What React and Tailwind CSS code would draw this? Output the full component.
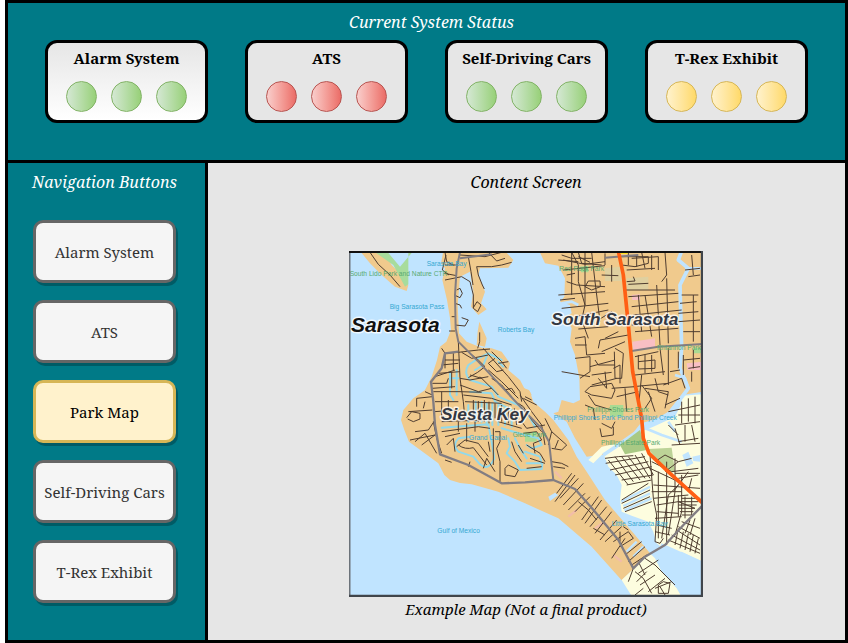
const statuses = [
  { name: 'Alarm System', tone: 'green', card: 'bg-linear-to-b from-[#e6e6e6] to-white' },
  { name: 'ATS', tone: 'red', card: 'bg-[#e6e6e6]' },
  { name: 'Self-Driving Cars', tone: 'green', card: 'bg-[#e6e6e6]' },
  { name: 'T-Rex Exhibit', tone: 'yellow', card: 'bg-[#e6e6e6]' },
];

const tones = {
  green: 'border-[#82b366] from-[#d5e8d4] to-[#97d077]',
  red: 'border-[#b85450] from-[#f8cecc] to-[#ea6b66]',
  yellow: 'border-[#d6b656] from-[#fff2cc] to-[#ffd966]',
};

const pages = ['Alarm System', 'ATS', 'Park Map', 'Self-Driving Cars', 'T-Rex Exhibit'];

function StatusCard({ name, tone, card }) {
  return (
    <section className={`flex h-[83px] w-[163px] flex-col items-center justify-between rounded-xl border-3 border-black pt-[3px] pb-2 ${card}`}>
      <h2 className="text-[15px] leading-6 font-bold whitespace-nowrap">{name}</h2>
      <div className="flex gap-3.5">
        {[0, 1, 2].map((i) => (
          <span key={i} className={`size-[31px] rounded-full border bg-linear-to-r ${tones[tone]}`} />
        ))}
      </div>
    </section>
  );
}

const streets = [
  // Lido and the northern tip of the key
  'M75 22L100 58L135 90L165 125M345 30L420 35L470 22M395 65H440L470 60L500 52M395 65L400 90L412 120L418 132M300 60H335M298 85L335 92M300 105L350 95L375 110L385 150V190L398 200L408 180L396 170L385 188M335 135L345 130L352 145L345 158L332 152M330 175L345 180L350 190M330 215H320M330 240L360 243L370 225L350 218M330 258H312M404 262V290L398 310M370 35L378 80L384 120M300 22L305 50L325 60M430 22L455 48L480 40M303 30L292 75L312 90',
  // Siesta Key, northern half
  'M290 310L300 325L340 322M340 322L400 315L435 312M350 322L380 340L430 330M300 345H345M290 360L340 355M270 395L330 375M262 415H305L310 400M262 430L330 425M320 380V430M340 290L345 400L355 470L360 525M345 400L375 405L430 395M345 420L400 440L440 430M440 320L470 350L485 370M450 340L430 355L455 380L475 375M415 310L445 345L490 395L525 440L530 470M400 345L420 365L398 382L370 398M440 400L470 420L500 455M355 450L440 460L500 480M360 470L470 475M240 440L262 450M215 485V460L262 455M190 500L262 495M185 518L200 500L225 505V522L205 530L188 522M270 470H340M268 500L340 495M240 470L235 490M290 440V520M310 465V500M385 465V525M400 468V530M418 465V530M432 470V535M450 475V520M470 480V530M490 485V535M508 490L515 540M525 450L560 500L590 540L600 600',
  'M375 325L400 345M430 375L470 410L520 460M460 355L490 350M405 395L460 450M535 460L575 480M540 455L560 465M480 435L500 430L510 445M520 475L535 485L560 525L590 560M600 520L620 560L665 600L650 615L620 610M620 560L610 600M640 585L630 610M530 530L545 550L600 540M300 325V370M325 325V375M280 385L345 380M265 440H345M345 440L410 442M375 390L410 400',
  // Siesta Key, central blocks
  'M210 560L250 555L270 525M195 585L270 570M210 590L240 565L275 625M230 600L270 570M265 530L275 580L290 625M290 560L400 545L435 550M300 575L345 565M305 600L325 580L330 620M335 605L360 585L400 595L430 635M340 600Q360 615 385 608L425 660M375 650L370 665M445 550V660M450 560H465V590L455 610L465 650V710M415 670L425 640L450 680M480 670L490 660L520 675L510 695L480 690ZM500 590L510 620L530 650M520 600L535 625M290 530L420 525M460 530L530 550M340 530V560M365 535V590M390 530V560M300 645L320 652M430 590L435 620M535 565L575 560L590 585L565 595L570 625M545 600L585 625L600 650M555 640L600 655M545 670L590 665',
  // Siesta Key, southern strip
  'M620 650L650 655L670 665M625 665L660 670M635 745L680 685M645 760L700 700M655 780L715 715M670 795L720 745M690 800L735 755M630 770L690 690M710 825L760 755M720 835L770 765M735 845L785 785M750 865L800 800M765 885L815 825M780 890L830 845M800 940L840 880M805 890L850 860L865 880L825 905M840 930L890 890M850 950L900 905M860 960L905 930M700 770L730 795L755 825M745 850L780 870M760 815L790 850M825 860V890M850 855L835 845',
  // Mainland, west to east
  'M680 22L700 60V110L720 180L710 225L730 280M740 22L750 110L765 230M650 30L680 40H740M655 45L720 58L780 50M655 75L780 62M665 90L690 85M665 110L695 120L780 125M720 125L730 108L765 108L766 125L740 135ZM640 150L780 140M645 165L690 160M650 190L790 175M690 215L790 195M760 225L800 200L820 230M700 252L790 245M690 280L720 275L725 330L780 325M690 300H725M760 310L765 285L850 270M770 320L840 290M690 340L735 335V380L705 400M735 365L810 345M740 390L800 382M740 420L815 400M810 310L835 325L830 400H810L808 320M720 440L735 425L800 415L810 435L800 460L740 450ZM730 450L750 480L800 495M800 430L870 425M805 370L825 360V415M815 455L880 440M720 480L745 490L750 525M840 430L845 500M680 22V150M720 22V180M640 45L700 50M650 380L735 395',
  'M830 35H910V55L870 65L830 60M850 22V60M875 30V65M845 75L930 70M860 40L940 35V75M845 110L870 108L865 95M850 118L910 115M890 22L900 70M920 30V75M960 22L965 90L950 110M840 135H990M850 155L1000 145M860 185L1000 170M865 210L1010 195M860 240L1000 230M870 260L1000 250M900 150L920 275M935 120L945 300M965 100L970 295M880 150L890 260M1020 75L1065 70M1030 95L1065 90M1010 150H1060M1005 175L1055 170M1000 205L1060 200M1000 230L1065 225M1015 260H1065M1045 150V290M1040 30L1045 90M870 335L940 320M880 350L930 345V370L880 372V330M900 330V385M920 330V380M870 390L960 380M945 310L955 390M970 310V420M865 425L970 415M890 390L880 490M900 430L970 440L960 490M910 440L930 500M930 400L940 440L970 450M955 420L1010 400L1020 430M975 380L1005 375M1000 320V370M1015 330V390M1030 370L1065 365M1040 380V410M960 480L1005 460M970 500L1065 480M900 490L920 460L890 420M1010 470V535M1030 460V530M1050 455V535M1000 510H1065M990 540L1065 530M1015 345L1065 340M1045 315V370M700 22L710 55L770 60M700 35L735 52M780 25V60M800 60V110M770 90L820 92M780 280L820 260M750 345L760 360L810 360M780 380L785 430M760 400L785 430',
  // Phillippi estates and the neighbourhoods to the south-east
  'M770 535L800 550L810 530M765 550L770 575L805 570V545M780 640L820 635L865 632M782 655L900 635M795 675L910 650M810 690L920 665M830 705L925 690M845 720L920 705M790 645L850 720M810 635L865 710M830 635L885 705M850 635L900 700M870 630L915 700M890 625L925 690M830 765L910 715M830 775L915 735M835 790L915 755M840 800L920 770M915 630L925 760L935 810L930 890M940 680V880M965 650V900M920 650L980 680L1060 670M915 670L1000 710M925 720L1065 730M920 740H1010M925 760L1030 750M935 780L1000 770L1050 790M935 800L1000 805M930 820L1010 815M935 840L980 850M930 860L975 870M990 640V740L970 870M1010 690V800L990 870M1040 700L1030 740M930 650L960 630L1000 650M960 680L1000 650L1040 640M1000 720L970 750L950 880M1030 680L985 740M1010 760H1065M1000 770H1060M1000 780H1055M1000 790H1050M1005 800H1045M1010 810H1040M1000 750V815M1020 755V820M1040 755V810',
  'M990 685H1065M1000 700L1060 690M1010 830L1065 850M1000 845L1065 880M995 855L1065 900M980 870L1065 915M970 885L1065 925M1000 850L990 900M1015 860L1005 910M1030 865L1020 915M1045 870L1035 920M1060 880L1050 925M1035 825L1020 865M1050 820L1035 870M930 890L945 895L955 880M870 980L895 1000L920 1045M865 970L850 1010M900 940L930 960L990 1020M880 950L900 990M880 985L940 945M875 1010L905 980M885 1020L930 990M910 1040L960 1000M940 1020L955 1010L975 1015L970 1045L940 1045ZM895 1030L870 1050M945 1025L960 1050M930 1030L980 1010M1000 590L1060 580M980 600L1065 595M990 550L1005 600M1020 540V590M1040 540L1050 590M970 540L1000 570',
];

const canals = [
  'M470 345L430 325L400 340L370 360Q355 385 375 405L440 425L460 455L520 480L550 510L570 545',
  'M425 335L415 360L390 375M460 350L475 365M315 380V450L325 465M335 375V450M315 400H340M375 440L440 445L450 470L500 495M370 480V530M392 470V530M410 470V530M425 475V540M442 475V540M460 480V540M480 485V540M500 500V545',
  'M290 548L430 538L440 590L448 640Q430 680 405 658L385 635L340 620Q320 600 340 580L375 575',
  'M490 580L495 605L485 625L510 650L525 675L590 672L592 655L545 655M510 580L525 610L545 640M470 550L540 570L580 580L590 600L560 610L545 600M540 620L585 635L590 655',
];

const waterNames = [
  ['Sarasota Bay', 245, 64],
  ['Big Sarasota Pass', 134, 191],
  ['Roberts Bay', 458, 262],
  ['Gulf of Mexico', 277, 865],
  ['Grand Canal', 372, 585],
  ['Phillippi Shores Park Pond Phillippi Creek', 626, 526],
  ['Little Sarasota Bay', 800, 844],
];

const parkNames = [
  ['South Lido Park and Nature CTR', 14, 92],
  ['Red Rock Park', 643, 79],
  ['Phillippi Shores Park', 727, 500],
  ['Rhiannon Park', 936, 314],
  ['Glebe Park', 503, 577],
  ['Phillippi Estate Park', 768, 599],
];

const places = [
  ['Sarasota', 18, 260, 63, '#111'],
  ['South Sarasota', 619, 239, 52, '#333842'],
  ['Siesta Key', 288, 524, 52, '#333842'],
];

function ParkMap() {
  return (
    <svg viewBox="12 18 1062 1038" className="h-auto w-[354px] max-w-full" role="img" aria-label="Map of Siesta Key and South Sarasota">
      <rect x="12" y="18" width="1062" height="1038" fill="#c0e4ff" />
      <g fill="#f0ca8d">
        <path d="M45 18L75 55L110 90L150 125L185 138L190 120L168 88L140 60L115 18Z" />
        <path d="M295 18L288 55L300 70L292 105L306 165L315 220L318 255L304 290L285 305L276 345L260 395L240 435L205 460L175 495L168 525L178 555L192 590L280 655L298 690L315 705L345 714L380 718L460 740L540 775L640 820L740 905L830 1006L915 925L870 870L780 765L725 680L695 635L670 585L625 525L600 500L565 470L555 440L538 430L525 405L490 375L495 355L470 320L440 310L410 308L365 290L342 265L338 180L345 95L375 80L385 140L378 185L400 210L425 193L408 175L420 140L400 90L405 70L490 68L505 45L480 18Z" />
        <path d="M583 18L600 55L640 62L660 100L658 155L645 170L675 180L680 205L662 215L680 250L675 290L690 330L703 400L705 465L685 475L650 465L640 500L625 505L665 530L690 580L725 635L780 628L840 585L885 550L970 500L1010 450L1074 440V18Z" />
      </g>
      <path d="M403 230L425 280L420 305L395 300L398 260ZM533 428L552 435L560 450L548 455Z" fill="#f0ca8d" />
      <path d="M85 18L145 60L180 125L190 118V18H205L165 65L125 18Z" fill="#a8dc9c" />
      <path d="M1074 448L1010 452L1010 475L990 515L925 545L900 555L840 590L770 605L730 645L745 655L775 625L790 665L815 690L830 720L825 765L830 800L860 812L910 830L925 860L935 895L970 925L1010 920L1074 950ZM830 1005L862 1056H1010L995 1030L950 980L930 940L915 925Z" fill="#fdfddf" />
      <g fill="none" stroke="#c0e4ff" strokeLinejoin="round">
        <path d="M775 630L820 600L870 565L890 540L960 520L1000 470L1030 430L1005 370L1010 310L1005 120L1030 70L1000 45L1010 18" strokeWidth="11" />
        <path d="M650 175L680 170L700 180M990 390L1020 400L1030 430M890 545L950 570L1010 590M1020 70H1074M990 560L970 530" strokeWidth="8" />
        <path d="M828 770L915 725M835 783L915 745M838 796L920 760M865 935L895 905M845 920L875 890" strokeWidth="7" />
      </g>
      <path d="M610 755L630 743L640 750L615 768ZM1012 630L1030 620L1045 655L1025 665ZM1042 635L1065 630V650L1045 648ZM950 895L1074 950V1050H1010L980 980L935 925Z" fill="#c0e4ff" />
      <path d="M825 600L885 555L905 615L840 628Z" fill="#a9c984" />
      <path d="M910 612L980 608L990 680L970 685Z" fill="#bdd397" />
      <path d="M795 480H835V515H795ZM1045 308H1074V325H1045ZM540 560H575V590H540ZM705 65L730 62V82H708Z" fill="#a9da92" />
      <path d="M780 70L825 65L830 108H780ZM845 100L910 95V135H845Z" fill="#dfd0a0" />
      <path d="M862 290L930 280V305L864 315ZM1025 355L1074 350V375H1028ZM860 150L885 148V165H862Z" fill="#f8bfc4" />
      <g fill="none" stroke="#f2bda8" strokeWidth="7">
        <path d="M630 680L650 700M670 815L695 795M750 850L780 830M805 930L830 950" />
      </g>
      <g fill="none" stroke="#91d9ec" strokeWidth="6" strokeLinejoin="round" strokeLinecap="round">
        {canals.map((d) => <path key={d} d={d} />)}
      </g>
      <g fill="none" stroke="#4f3d30" strokeWidth="3" strokeLinejoin="round">
        {streets.map((d) => <path key={d} d={d} />)}
      </g>
      <g fill="none" stroke="#827d82" strokeLinejoin="round">
        <path d="M345 22L335 70L330 150L332 250L340 290L400 350L470 425L540 500L590 550L612 590L625 705" strokeWidth="6" />
        <path d="M340 320L300 325L290 370L258 410L265 470L270 540L285 628L370 660L470 715L540 712L625 705L690 732L750 800L820 885L865 970L900 935L960 900L1020 835L1074 780" strokeWidth="7" />
        <path d="M345 40L440 28M860 318L940 305L1074 297M780 38L880 30" strokeWidth="6" />
      </g>
      <path d="M820 18L835 90L850 240L863 380L890 520L895 580L912 625L975 685L1074 775" fill="none" stroke="#ff5f14" strokeWidth="11" strokeLinejoin="round" />
      <path d="M825 18H848V27H827Z" fill="#ffe21f" />
      <g className="font-['Liberation_Sans',sans-serif]" fontSize="20">
        <g fill="#35a8d2">
          {waterNames.map(([name, x, y]) => <text key={name} x={x} y={y}>{name}</text>)}
        </g>
        <g fill="#58aa70">
          {parkNames.map(([name, x, y]) => <text key={name} x={x} y={y}>{name}</text>)}
        </g>
      </g>
      <g className="font-['Liberation_Sans',sans-serif] font-bold italic" stroke="#fff" strokeOpacity="0.75" strokeWidth="9" strokeLinejoin="round" paintOrder="stroke">
        {places.map(([name, x, y, size, fill]) => (
          <text key={name} x={x} y={y} fontSize={size} fill={fill}>{name}</text>
        ))}
      </g>
      <path d="M14 18V1056" stroke="#6c737a" strokeWidth="5" />
      <path d="M12 21H1074" stroke="#111" strokeWidth="6" />
      <path d="M1071 18V1053H12" fill="none" stroke="#40454b" strokeWidth="7" />
    </svg>
  );
}

export default function App() {
  return (
    <div className="min-h-screen bg-white pl-[5px] font-['Noto_Serif','Droid_Serif','DejaVu_Serif_Condensed','DejaVu_Serif',serif]">
      <div className="flex min-h-screen flex-col border-3 border-black bg-[#007a87]">
        <header className="h-40 border-b-3 border-black px-[37px] pt-[7px]">
          <h1 className="pl-2.5 text-center text-base leading-6 text-white italic">Current System Status</h1>
          <div className="mt-1.5 flex justify-between">
            {statuses.map((s) => <StatusCard key={s.name} {...s} />)}
          </div>
        </header>
        <div className="flex flex-1">
          <nav className="w-[200px] shrink-0 border-r-3 border-black pt-[7px] pr-[29px] pl-[25px]">
            <h2 className="-mx-5 text-center text-base leading-6 whitespace-nowrap text-white italic">Navigation Buttons</h2>
            <div className="mt-[26px] flex flex-col gap-[17px]">
              {pages.map((p) => (
                <button
                  key={p}
                  type="button"
                  className={`h-[63px] rounded-[10px] border-3 pt-0.5 text-[15px] whitespace-nowrap shadow-[2px_3px_0_rgba(0,0,0,0.25)] ${p === 'Park Map' ? 'border-[#d6b656] bg-[#fff2cc] text-black' : 'border-[#666] bg-[#f5f5f5] text-[#333]'}`}
                >
                  {p}
                </button>
              ))}
            </div>
          </nav>
          <main className="flex min-w-0 flex-1 flex-col items-center bg-[#e6e6e6] pt-[7px] pr-px">
            <h2 className="text-base leading-6 italic">Content Screen</h2>
            <figure className="mt-[57px] flex flex-col items-center">
              <ParkMap />
              <figcaption className="text-[15px] leading-6 italic">Example Map (Not a final product)</figcaption>
            </figure>
          </main>
        </div>
      </div>
    </div>
  );
}
